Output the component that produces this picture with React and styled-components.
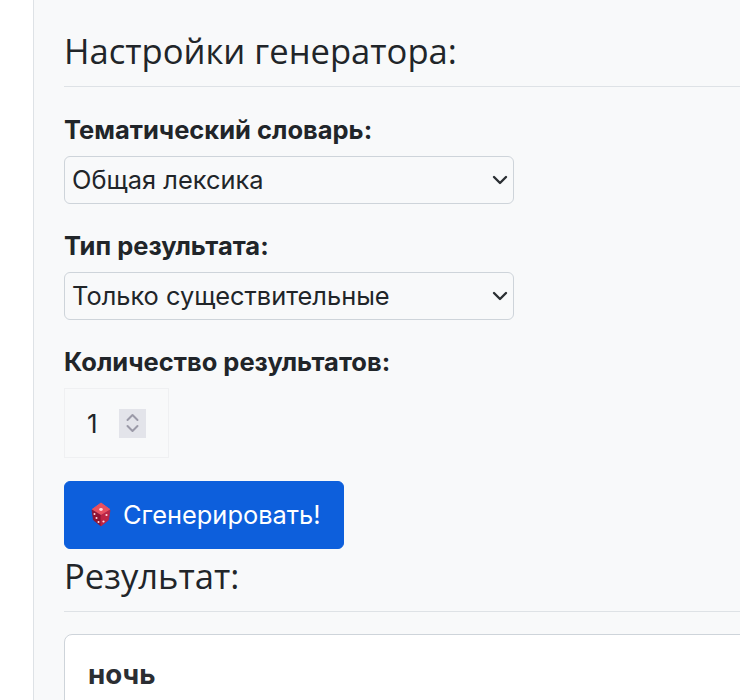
import React from "react";
import styled, { createGlobalStyle } from "styled-components";

const Global = createGlobalStyle`
  html, body { margin: 0; padding: 0; background: #fff; overflow: hidden; height: 700px; }
  * { box-sizing: border-box; }
`;
const Page = styled.div`
  width: 740px; height: 700px; overflow: hidden; background: #fff;
  padding-left: 33px;
  font-family: Inter, "Noto Sans", "Liberation Sans", sans-serif; color: #212529;
`;
const Panel = styled.main`
  width: 760px; height: 700px; background: #f8f9fa; border-left: 1px solid #dee2e6;
  padding: 29px 0 0 30px;
`;
const Heading = styled.h2`
  margin: 0; font-family: "Open Sans", Inter, sans-serif; font-weight: 400; color: #212529;
  font-size: 34.6px; line-height: 44px;
  padding-bottom: 13px; border-bottom: 1px solid #dee2e6;
  margin-bottom: ${p => p.$after}px;
`;
const Field = styled.div`
  margin-bottom: 26px;
`;
const Label = styled.label`
  display: block; font-weight: 700; font-size: 25.5px; line-height: 32px; margin-bottom: 10px;
`;
const SelectBox = styled.div`
  width: 450px; height: 48px; border: 1px solid #ced4da; border-radius: 6px; background: #f8f9fa;
  display: flex; align-items: center; justify-content: space-between;
  padding: 0 1px 1px 7px; font-size: 25.4px;
`;
const NumberBox = styled.div`
  width: 105px; height: 70px; border: 1px solid #eff0f2; display: flex; align-items: center;
  padding-left: 22px; gap: 21px; font-size: 26px;
`;
const Spinner = styled.div`
  width: 27px; height: 29px; background: #e3e4ea; display: flex; align-items: center; justify-content: center;
`;
const GenerateButton = styled.button`
  display: flex; align-items: center; gap: 12px; width: 280px; height: 68px; margin-top: 23px;
  background: #0d5fdc; border: 1px solid #0d5fdc; border-radius: 6px; color: #fff;
  font-family: inherit; font-size: 25.4px; padding: 0 0 2px 26px;
`;
const ResultCard = styled.div`
  width: 700px; height: 120px; background: #fff; border: 1px solid #ced4da; border-radius: 8px;
  padding: 21px 23px; font-weight: 700; font-size: 27.7px; line-height: 36px; color: #2b2e33;
`;
const ResultHead = styled.div`
  margin-top: 5px;
`;

const Chevron = () => (
  <svg width="24" height="24" viewBox="0 0 24 24" fill="none">
    <path d="M6 9l6 6 6-6" stroke="#2b2f33" strokeWidth="2.4" strokeLinecap="round" strokeLinejoin="round" />
  </svg>
);
const SpinIcon = () => (
  <svg width="13" height="20" viewBox="0 0 13 20" fill="none" stroke="#9b9aa8" strokeWidth="2" strokeLinecap="round" strokeLinejoin="round">
    <path d="M1.5 7l5-5 5 5M1.5 13l5 5 5-5" />
  </svg>
);
const Dice = () => (
  <svg width="20" height="25" viewBox="0 0 20 25">
    <path d="M10 1L19 7.5 10 13 1 7.5z" fill="#e8505f" stroke="#e8505f" strokeLinejoin="round" />
    <path d="M1 8l9 5.5V24L2.5 18z" fill="#8f1431" stroke="#8f1431" strokeWidth=".8" strokeLinejoin="round" />
    <path d="M19 8l-9 5.5V24l7.5-6z" fill="#bd2444" stroke="#bd2444" strokeWidth=".8" strokeLinejoin="round" />
    <g fill="#ffdbe0">
      <ellipse cx="10" cy="7.5" rx="1.8" ry="1.4" />
      <circle cx="3.5" cy="12" r="1" /><circle cx="5.5" cy="16" r="1" /><circle cx="7.5" cy="20" r="1" />
      <circle cx="15.5" cy="13" r="1.1" /><circle cx="12.5" cy="19.5" r="1.1" />
    </g>
  </svg>
);

export default function App() {
  return (
    <Page>
      <Global />
      <Panel>
        <Heading $after={27}>Настройки генератора:</Heading>
        <Field>
          <Label>Тематический словарь:</Label>
          <SelectBox>Общая лексика<Chevron /></SelectBox>
        </Field>
        <Field>
          <Label>Тип результата:</Label>
          <SelectBox>Только существительные<Chevron /></SelectBox>
        </Field>
        <Label>Количество результатов:</Label>
        <NumberBox>1<Spinner><SpinIcon /></Spinner></NumberBox>
        <GenerateButton><Dice />Сгенерировать!</GenerateButton>
        <ResultHead>
          <Heading $after={22}>Результат:</Heading>
        </ResultHead>
        <ResultCard>ночь</ResultCard>
      </Panel>
    </Page>
  );
}
